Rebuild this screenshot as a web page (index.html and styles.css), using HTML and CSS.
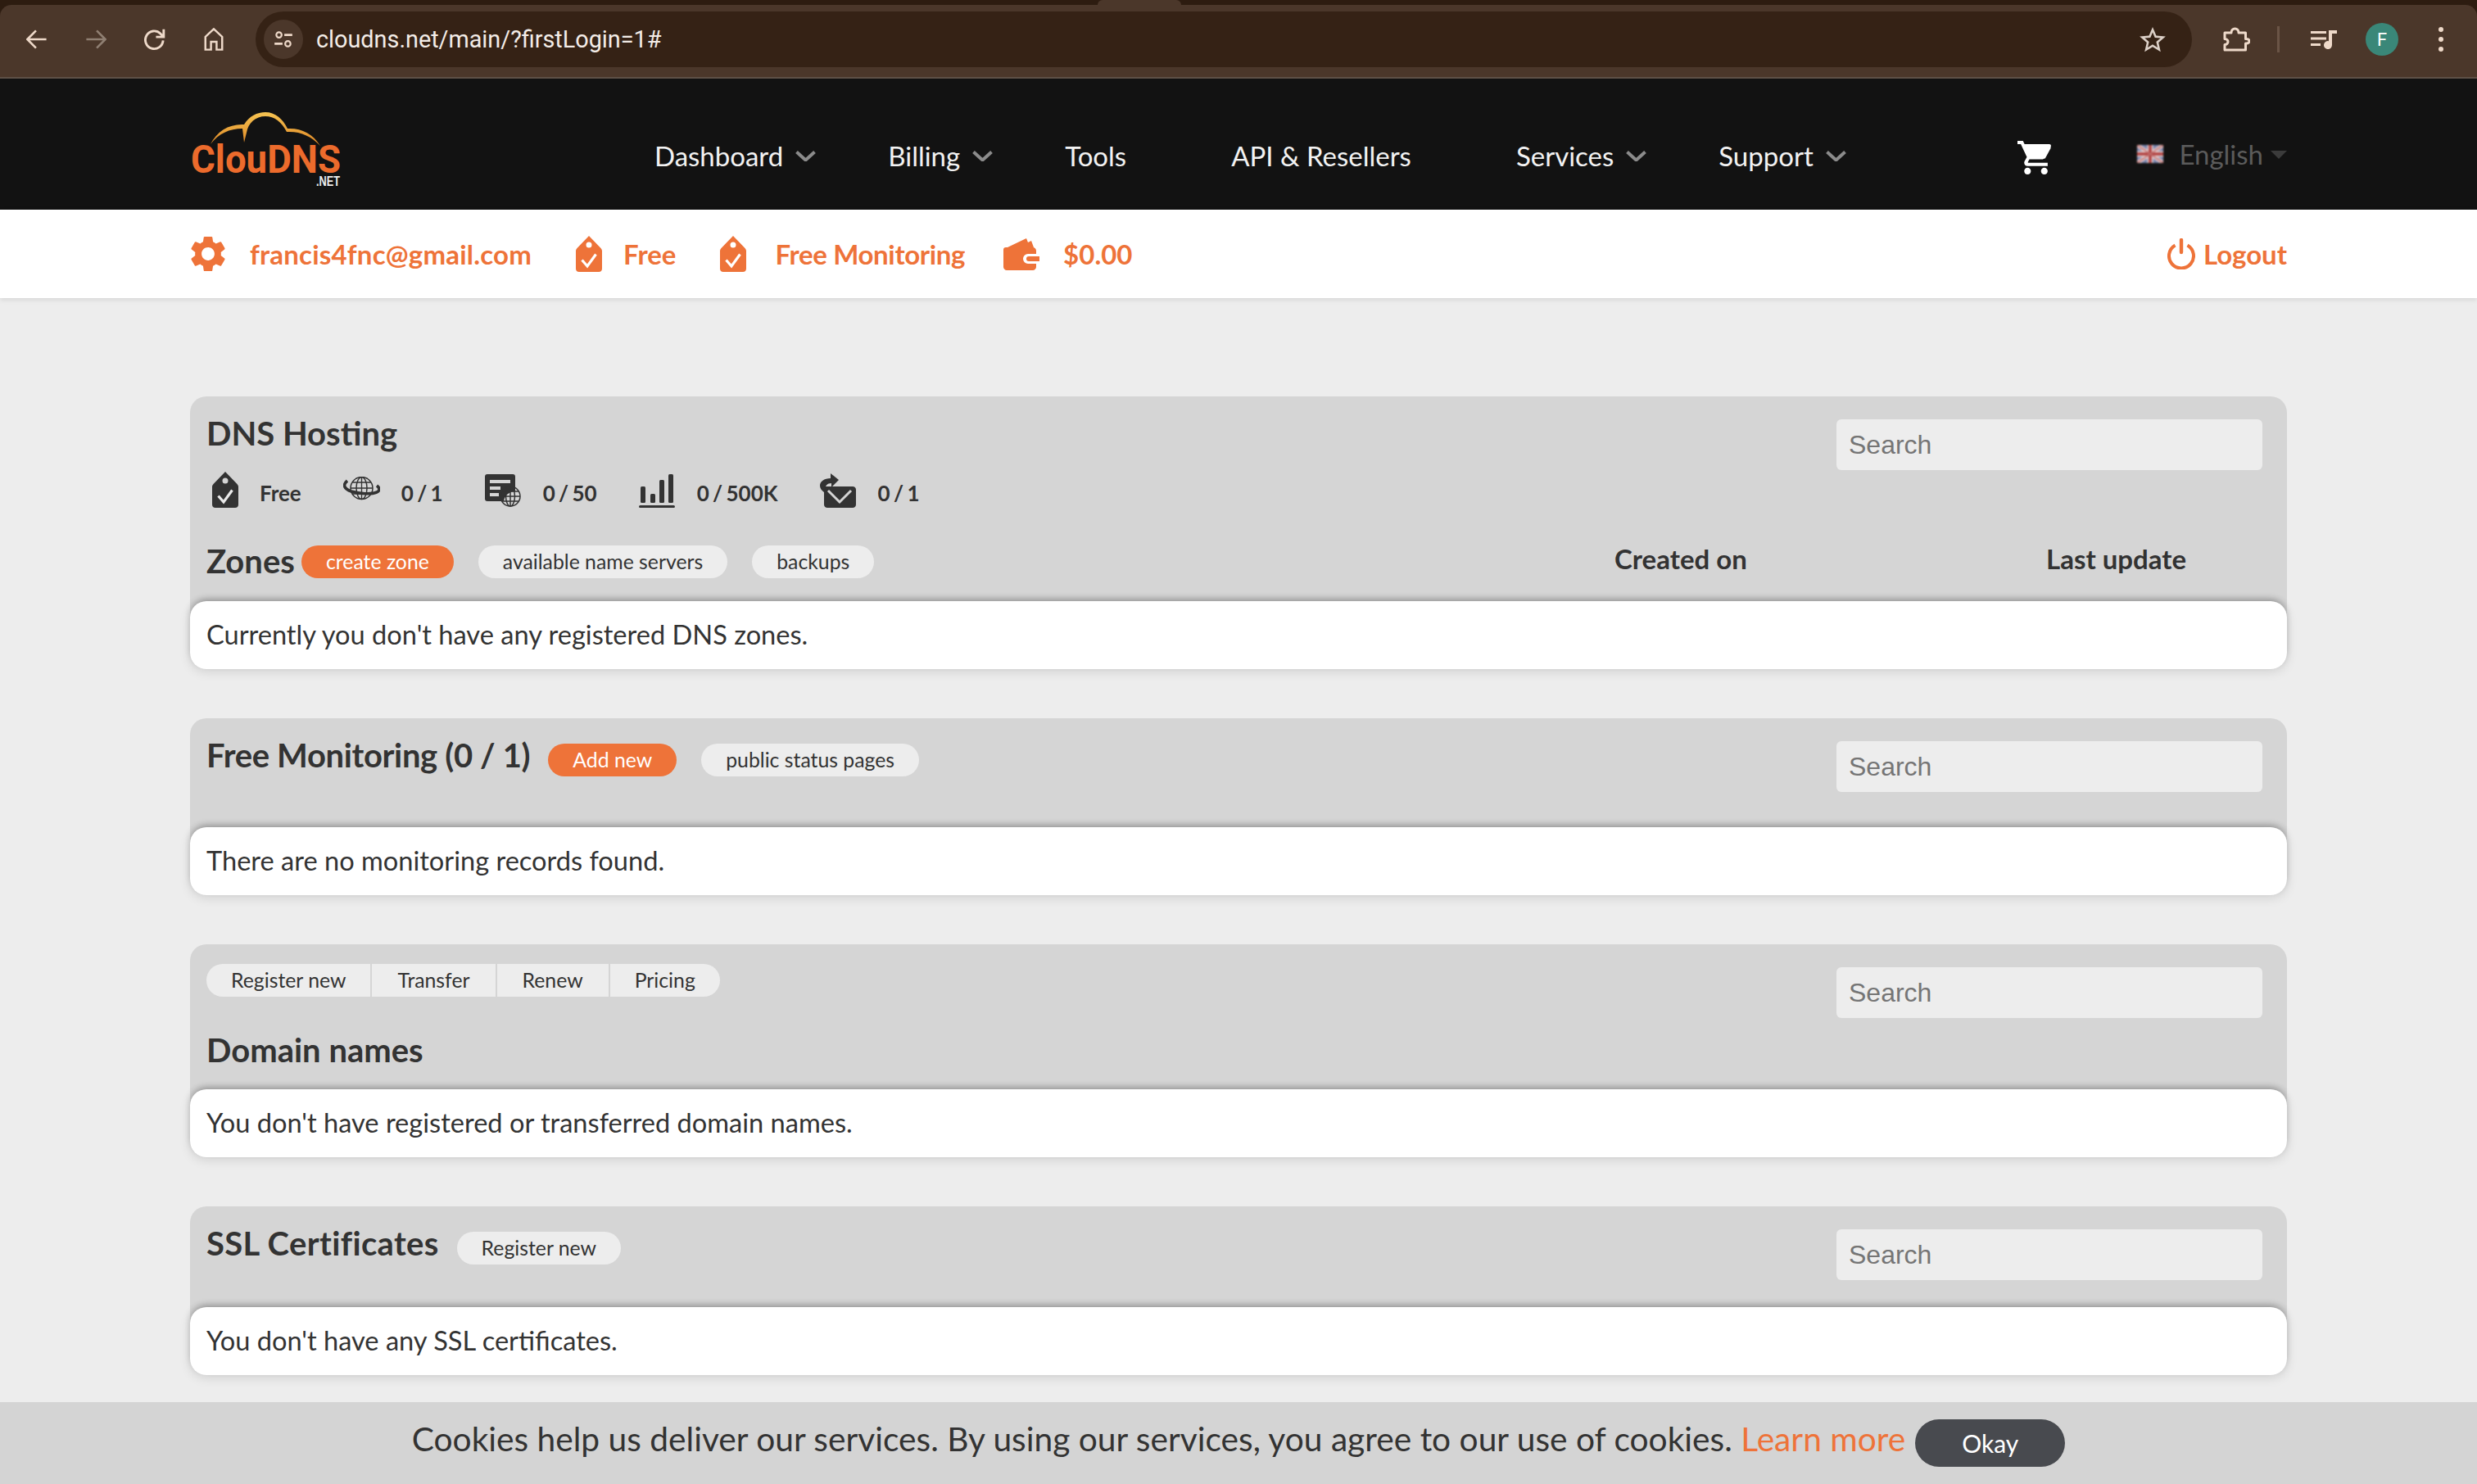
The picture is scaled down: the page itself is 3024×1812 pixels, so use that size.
FILE: index.html
```html
<!DOCTYPE html>
<html lang="en">
<head>
<meta charset="utf-8">
<title>ClouDNS</title>
<link rel="stylesheet" href="styles.css">
</head>
<body>
<svg class="defs" width="0" height="0" aria-hidden="true">
  <defs>
    <symbol id="tag" viewBox="0 0 32 44">
      <path fill-rule="evenodd" d="M16 0l14 14.500c1.300 1.300 2 2.500 2 4V40c0 2.500-1.500 4-4 4H4c-2.500 0-4-1.500-4-4V18.500c0-1.500.7-2.700 2-4zM16 7.500a3.500 3.500 0 1 0 0 7 3.500 3.500 0 0 0 0-7z"/>
      <path d="M7.500 29.500l6.500 7.500 10.500-14.500" fill="none" stroke="var(--cut)" stroke-width="3.200"/>
    </symbol>
  </defs>
</svg>

<header class="browser">
  <div class="toolbar">
    <div class="tool-group">
      <svg class="t-icon" viewBox="3 3.500 18.500 17"><path d="M20.500 12H4.500M11.500 4.500L4 12l7.500 7.500" fill="none" stroke="currentColor" stroke-width="1.800"/></svg>
      <svg class="t-icon dim" viewBox="2.500 3.500 18.500 17"><path d="M3.500 12h16M12.500 4.500L20 12l-7.500 7.500" fill="none" stroke="currentColor" stroke-width="1.800"/></svg>
      <svg class="t-icon" viewBox="3 2.500 18 19"><path d="M19 13a7.500 7.500 0 1 1-2.300-5.900L19 9.500M19.500 3.500V10H13" fill="none" stroke="currentColor" stroke-width="2"/></svg>
      <svg class="t-icon" viewBox="3.500 2 17 20.500"><path d="M4.500 21.500V10L12 3l7.500 7v11.500H14.500V14.500H9.500v7z" fill="none" stroke="currentColor" stroke-width="1.800"/></svg>
    </div>
    <div class="omnibox">
      <span class="tune"><svg viewBox="0 0 24 24" width="26" height="26"><circle cx="7" cy="7" r="3" fill="none" stroke="currentColor" stroke-width="2"/><path d="M13 7h9M2 17h9" stroke="currentColor" stroke-width="2.500"/><circle cx="17" cy="17" r="3" fill="none" stroke="currentColor" stroke-width="2"/></svg></span>
      <span class="url">cloudns.net/main/?firstLogin=1#</span>
      <svg class="star" viewBox="2 2 20 19.500"><path fill="currentColor" d="M22 9.240l-7.190-.62L12 2 9.190 8.630 2 9.240l5.460 4.730L5.820 21 12 17.270 18.180 21l-1.630-7.030L22 9.240zM12 15.400l-3.760 2.270 1-4.280-3.320-2.880 4.380-.38L12 6.100l1.710 4.040 4.380.38-3.320 2.880 1 4.280L12 15.400z"/></svg>
    </div>
    <div class="tool-right">
      <svg class="ext" viewBox="0 0 34 32"><path d="M3 8h8c0-3 2-5 4.500-5S20 5 20 8h8.500v7.500c3 0 4.500 1 4.500 2.500s-1.500 3-4.500 3v8H3v-6.500c2.500 0 4-1.800 4-3.500s-1.500-3.500-4-3.500z" fill="none" stroke="currentColor" stroke-width="3" stroke-linejoin="round"/></svg>
      <span class="sep"></span>
      <svg class="media" viewBox="0 0 32 24"><path d="M0 2h19v3H0zM0 9.500h19v3H0zM0 17h12v3H0zM22 1h10v4h-6v14a5 5 0 1 1-4-4.800z" fill="currentColor"/></svg>
      <span class="avatar">F</span>
      <span class="dots"><i></i><i></i><i></i></span>
    </div>
  </div>
</header>

<nav class="topnav">
  <a class="logo" href="#" aria-label="ClouDNS.net">
    <svg viewBox="0 0 200 100" width="200" height="100">
      <defs>
        <linearGradient id="cloudgrad" x1="0" x2="0" y1="0" y2="1">
          <stop offset="0" stop-color="#f6c452"/>
          <stop offset="1" stop-color="#dd8524"/>
        </linearGradient>
      </defs>
      <path d="M25 40C33 24 48 15 66 16 72 6 82 1 92 1c12 0 21 8 27 20 16-1 31 6 40 21-11-12-25-18-41-17C112 13 103 6 92 6 80 6 71 14 69 26L66 38 64 21C48 21 35 27 25 40z" fill="url(#cloudgrad)"/>
      <text class="logo-main" x="1" y="75" textLength="183" lengthAdjust="spacingAndGlyphs">ClouDNS</text>
      <text class="logo-net" x="154" y="91" textLength="29" lengthAdjust="spacingAndGlyphs">.NET</text>
    </svg>
  </a>
  <ul class="menu">
    <li class="menu-item">Dashboard<svg class="chev" viewBox="0 0 25 13"><path d="M1.500 1.500l11 10 11-10" fill="none" stroke="currentColor" stroke-width="4"/></svg></li>
    <li class="menu-item">Billing<svg class="chev" viewBox="0 0 25 13"><path d="M1.500 1.500l11 10 11-10" fill="none" stroke="currentColor" stroke-width="4"/></svg></li>
    <li class="menu-item plain">Tools</li>
    <li class="menu-item plain">API &amp; Resellers</li>
    <li class="menu-item">Services<svg class="chev" viewBox="0 0 25 13"><path d="M1.500 1.500l11 10 11-10" fill="none" stroke="currentColor" stroke-width="4"/></svg></li>
    <li class="menu-item">Support<svg class="chev" viewBox="0 0 25 13"><path d="M1.500 1.500l11 10 11-10" fill="none" stroke="currentColor" stroke-width="4"/></svg></li>
  </ul>
  <svg class="cart" viewBox="1 2 21 20"><path fill="currentColor" d="M7 18c-1.100 0-1.990.9-1.990 2S5.900 22 7 22s2-.9 2-2-.9-2-2-2zM1 2v2h2l3.600 7.590-1.350 2.450c-.16.28-.25.61-.25.96 0 1.100.9 2 2 2h12v-2H7.420c-.14 0-.25-.11-.25-.25l.03-.12.9-1.630h7.450c.75 0 1.410-.41 1.750-1.030l3.580-6.490c.08-.14.12-.31.12-.48 0-.55-.45-1-1-1H5.210l-.94-2H1zm16 16c-1.100 0-1.990.9-1.990 2s.89 2 1.990 2 2-.9 2-2-.9-2-2-2z"/><path fill="currentColor" d="M6 6h15l-3.500 6.500H8.500z"/></svg>
  <div class="lang">
    <svg class="flag" viewBox="0 0 32 22"><rect width="32" height="22" fill="#6f7fb4"/><path d="M0 0l32 22M32 0L0 22" stroke="#e9c9c9" stroke-width="5"/><path d="M16 0v22M0 11h32" stroke="#ecdcdc" stroke-width="7"/><path d="M16 0v22M0 11h32" stroke="#c9413f" stroke-width="4"/><path d="M0 0l32 22M32 0L0 22" stroke="#cf6a6a" stroke-width="1.500"/></svg>
    <span class="lang-name">English</span>
    <span class="caret"></span>
  </div>
</nav>

<div class="subbar">
  <a class="sub-item item-email" href="#">
    <svg class="gear" viewBox="2.500 2 19 20"><path fill="currentColor" d="M19.140 12.940c.04-.3.06-.61.06-.94 0-.32-.02-.64-.07-.94l2.030-1.580c.18-.14.23-.41.12-.61l-1.920-3.320c-.12-.22-.37-.29-.59-.22l-2.390.96c-.5-.38-1.030-.7-1.620-.94l-.36-2.540c-.04-.24-.24-.41-.48-.41h-3.840c-.24 0-.43.17-.47.41l-.36 2.540c-.59.24-1.130.57-1.620.94l-2.390-.96c-.22-.08-.47 0-.59.22L2.740 8.870c-.12.21-.08.47.12.61l2.030 1.580c-.05.3-.09.63-.09.94s.02.64.07.94l-2.030 1.580c-.18.14-.23.41-.12.61l1.920 3.320c.12.22.37.29.59.22l2.390-.96c.5.38 1.030.7 1.620.94l.36 2.540c.05.24.24.41.48.41h3.840c.24 0 .44-.17.47-.41l.36-2.540c.59-.24 1.130-.56 1.620-.94l2.390.96c.22.08.47 0 .59-.22l1.920-3.320c.12-.22.07-.47-.12-.61l-2.010-1.580zM12 15.600c-1.980 0-3.600-1.620-3.600-3.600s1.620-3.600 3.600-3.600 3.600 1.620 3.600 3.600-1.620 3.600-3.600 3.600z"/></svg>
    francis4fnc@gmail.com
  </a>
  <a class="sub-item item-free" href="#"><svg class="tag-o"><use href="#tag"/></svg>Free</a>
  <a class="sub-item item-mon" href="#"><svg class="tag-o"><use href="#tag"/></svg>Free Monitoring</a>
  <a class="sub-item item-bal" href="#">
    <svg class="wallet" viewBox="0 0 44 40"><path fill="currentColor" d="M5 12L28 1l2 5 4-2 3 8zM3 12h33c2 0 4 2 4 4v4H30a6 6 0 0 0 0 12h10v4c0 2-2 4-4 4H4c-2 0-4-2-4-4V15c0-2 1-3 3-3zM31 23h13v6H31a3 3 0 0 1 0-6z"/></svg>
    $0.00
  </a>
  <a class="sub-item item-logout" href="#">
    <svg class="power" viewBox="0 0 34 38"><path d="M9.500 8.500a15 15 0 1 0 15 0" fill="none" stroke="currentColor" stroke-width="4"/><path d="M17 2v15" stroke="currentColor" stroke-width="4.400" stroke-linecap="round"/></svg>
    Logout
  </a>
</div>

<main class="content">
  <section class="panel">
    <div class="head head-dns">
      <div class="head-top">
        <div class="head-main">
          <h2 class="title">DNS Hosting</h2>
          <div class="stats">
            <span class="stat"><svg class="s-tag"><use href="#tag"/></svg>Free</span>
            <span class="stat">
              <svg class="s-globe" viewBox="0 0 45 29"><g fill="none" stroke="currentColor"><circle cx="22.500" cy="14" r="13.500" stroke-width="1.500"/><ellipse cx="22.500" cy="14" rx="6.500" ry="13.500" stroke-width="1.500"/><path d="M22.500 1v26M9 14h27M11 7h23M11 21h23" stroke-width="1.300"/><path d="M5 5C-1 10 1 15 10 18c10 3 24 4 31 1 4-2 4-5 0-8" stroke-width="3.600"/></g></svg>
              0 / 1
            </span>
            <span class="stat">
              <svg class="s-server" viewBox="0 0 44 40"><path fill="currentColor" d="M3 0h31c2 0 3 1 3 3v18a14 14 0 0 0-14 12H3c-2 0-3-1-3-3V3c0-2 1-3 3-3z"/><path d="M6 7h25v4H6zM6 15h13v4H6zM6 23h11v4H6z" fill="#d5d5d5"/><g fill="none" stroke="currentColor" stroke-width="1.500"><circle cx="31" cy="27" r="12"/><ellipse cx="31" cy="27" rx="5.500" ry="12"/><path d="M31 15v24M19 27h24M21 21h20M21 33h20"/></g></svg>
              0 / 50
            </span>
            <span class="stat">
              <svg class="s-bars" viewBox="0 0 44 41"><g fill="currentColor"><rect x="2" y="15" width="6" height="20" rx="1.500"/><rect x="14" y="24" width="6" height="11" rx="1.500"/><rect x="25" y="7" width="6" height="28" rx="1.500"/><rect x="36" y="0" width="6" height="35" rx="1.500"/><rect x="0" y="38" width="44" height="3" rx="1.500"/></g></svg>
              0 / 500K
            </span>
            <span class="stat">
              <svg class="s-mail" viewBox="0 0 44 42"><path fill="currentColor" d="M5 16h35c2 0 4 1.500 4 4v18c0 2.500-2 4-4 4H9c-2 0-4-1.500-4-4z"/><path d="M10 21l14 14 14-14" fill="none" stroke="#d5d5d5" stroke-width="3"/><path fill="currentColor" d="M13 0l10 8-9 9v-5c-5 0-8 3-9 11-3-2-5-5-5-8 0-5 5-9 13-9z"/></svg>
              0 / 1
            </span>
          </div>
        </div>
        <input class="search" type="text" placeholder="Search" aria-label="Search">
      </div>
      <div class="zones">
        <div class="zones-left">
          <span class="zones-title">Zones</span>
          <a class="pill orange" href="#">create zone</a>
          <a class="pill" href="#">available name servers</a>
          <a class="pill" href="#">backups</a>
        </div>
        <span class="col-label">Created on</span>
        <span class="col-label">Last update</span>
      </div>
    </div>
    <div class="body">Currently you don't have any registered DNS zones.</div>
  </section>

  <section class="panel">
    <div class="head head-mon">
      <div class="head-row">
        <h2 class="title title-mon">Free Monitoring (0 / 1)</h2>
        <a class="pill orange" href="#">Add new</a>
        <a class="pill" href="#">public status pages</a>
      </div>
      <input class="search" type="text" placeholder="Search" aria-label="Search">
    </div>
    <div class="body">There are no monitoring records found.</div>
  </section>

  <section class="panel">
    <div class="head head-dom">
      <div class="head-stack">
        <div class="segments">
          <a class="segment" href="#">Register new</a>
          <a class="segment" href="#">Transfer</a>
          <a class="segment" href="#">Renew</a>
          <a class="segment" href="#">Pricing</a>
        </div>
        <h2 class="title title-dom">Domain names</h2>
      </div>
      <input class="search" type="text" placeholder="Search" aria-label="Search">
    </div>
    <div class="body">You don't have registered or transferred domain names.</div>
  </section>

  <section class="panel">
    <div class="head head-ssl">
      <div class="head-row">
        <h2 class="title title-ssl">SSL Certificates</h2>
        <a class="pill" href="#">Register new</a>
      </div>
      <input class="search" type="text" placeholder="Search" aria-label="Search">
    </div>
    <div class="body">You don't have any SSL certificates.</div>
  </section>
</main>

<div class="cookie">
  <span class="cookie-text">Cookies help us deliver our services. By using our services, you agree to our use of cookies. <a href="#">Learn more</a></span>
  <button class="okay" type="button">Okay</button>
</div>
</body>
</html>
```
FILE: styles.css
```css
* { box-sizing: border-box; }
html, body { margin: 0; padding: 0; }
body {
  background: #ededed;
  color: #333;
  font-family: "Lato", "Noto Sans", sans-serif;
  height: 1812px;
  overflow: hidden;
}
a { color: inherit; text-decoration: none; }
.defs { position: absolute; }

/* browser chrome */
.browser { background: #2d1c10; height: 96px; padding-top: 6px; position: relative; }
.browser::before {
  content: "";
  position: absolute;
  left: 1340px; top: 0;
  width: 102px; height: 6px;
  background: #4b372a;
  border-radius: 6px 6px 0 0;
}
.toolbar {
  height: 90px;
  background: #4b372a;
  border-radius: 14px 14px 0 0;
  border-bottom: 2px solid #5e5147;
  display: flex;
  align-items: flex-start;
  padding: 8px 0 0 32px;
  color: #eed9c9;
}
.tool-group { display: flex; align-items: center; gap: 46px; height: 68px; }
.t-icon { width: 26px; height: 28px; display: block; }
.t-icon.dim { color: #8f7f72; }
.omnibox {
  margin-left: 38px;
  width: 2364px;
  height: 68px;
  border-radius: 34px;
  background: #352215;
  display: flex;
  align-items: center;
  padding: 0 32px 0 10px;
}
.tune {
  width: 48px; height: 48px; border-radius: 50%;
  background: #4b372a;
  display: flex; align-items: center; justify-content: center;
  color: #eed9c9;
}
.url {
  margin-left: 16px;
  flex: 1;
  font: 400 28.800px "Roboto", sans-serif;
  color: #f3ece7;
}
.star { width: 32px; height: 31px; color: #dcd0c7; }
.tool-right { display: flex; align-items: center; height: 68px; margin-left: 37px; }
.ext { width: 34px; height: 32px; }
.sep { width: 3px; height: 32px; background: #6a5446; margin-left: 33px; }
.media { width: 32px; height: 24px; margin-left: 38px; }
.avatar {
  width: 40px; height: 40px; border-radius: 50%;
  background: #3a8778; color: #fff;
  margin-left: 35px;
  display: flex; align-items: center; justify-content: center;
  font: 400 22px "Roboto", sans-serif;
}
.dots { display: flex; flex-direction: column; gap: 6px; margin-left: 49px; }
.dots i { width: 6px; height: 6px; border-radius: 50%; background: #eed9c9; display: block; }

/* top nav */
.topnav {
  height: 160px;
  background: #121212;
  padding: 0 232px;
  display: flex;
  align-items: center;
  color: #f2f2f2;
}
.logo { width: 200px; height: 100px; display: block; margin-top: 20px; }
.logo svg { display: block; }
.logo-main { font: 700 48px "Roboto", sans-serif; fill: #ec6b2c; }
.logo-net { font: 700 16px "Liberation Sans", sans-serif; fill: #eee; }
.menu {
  list-style: none;
  margin: 0 0 0 367px;
  padding: 28px 0 0;
  display: flex;
  gap: 88px;
  height: 100%;
  align-items: center;
}
.menu-item { display: flex; align-items: center; font-size: 33px; white-space: nowrap; }
.menu-item.plain { padding-right: 40px; }
.chev { width: 25px; height: 13px; margin-left: 15px; color: #8b8b8b; }
.cart { width: 43px; height: 43px; color: #fff; margin-left: 209px; margin-top: 33px; }
.lang { display: flex; align-items: center; margin-left: auto; color: #5b5b5b; font-size: 33px; margin-top: 23px; }
.flag { width: 32px; height: 22px; filter: blur(.8px) saturate(.8); }
.lang-name { margin-left: 19px; }
.caret {
  width: 0; height: 0;
  margin-left: 9px; margin-top: 2px;
  border-left: 10px solid transparent;
  border-right: 10px solid transparent;
  border-top: 10px solid #3b3b3b;
}

/* subbar */
.subbar {
  height: 108px;
  background: #fff;
  padding: 0 232px;
  display: flex;
  align-items: center;
  color: #ee7339;
  font-size: 33px;
  font-weight: 700;
  box-shadow: 0 2px 6px rgba(0,0,0,.1);
  --cut: #fff;
}
.sub-item { display: flex; align-items: center; white-space: nowrap; }
.item-email { letter-spacing: .2px; }
.gear { width: 44px; height: 44px; margin-right: 29px; }
.tag-o { width: 32px; height: 44px; fill: currentColor; }
.item-free { margin-left: 54px; }
.item-free .tag-o { margin-right: 26px; }
.item-mon { margin-left: 54px; letter-spacing: -.35px; }
.item-mon .tag-o { margin-right: 35px; }
.item-bal { margin-left: 47px; }
.wallet { width: 44px; height: 40px; margin-right: 29px; }
.item-logout { margin-left: auto; }
.power { width: 34px; height: 38px; margin-right: 10px; }

/* panels */
.content { padding: 120px 232px 0; display: flex; flex-direction: column; gap: 60px; --cut: #e9e9e9; }
.panel { background: #d5d5d5; border-radius: 20px; }
.head { display: flex; justify-content: space-between; align-items: flex-start; padding: 0 30px 0 20px; }
.head-dns { display: block; height: 250px; }
.head-mon { height: 133px; }
.head-dom { height: 177px; }
.head-ssl { height: 123px; }
.head-top { display: flex; justify-content: space-between; align-items: flex-start; }
.head-row { display: flex; align-items: flex-start; padding-top: 20px; }
.head-row .pill { margin-top: 11px; margin-left: 30px; }
.head-row .title + .pill { margin-left: 22px; }
.title { margin: 0; padding-top: 20px; font-size: 40px; line-height: 50px; font-weight: 700; color: #333; white-space: nowrap; }
.head-row .title { padding-top: 0; }
.title-mon { letter-spacing: -.35px; }
.title-ssl { letter-spacing: .35px; }
.search {
  width: 520px;
  height: 62px;
  margin-top: 28px;
  background: #ededed;
  border: 0;
  border-radius: 6px;
  padding: 0 15px;
  font: 400 32px "Liberation Sans", sans-serif;
  color: #333;
  outline: 0;
  display: block;
}
.search::placeholder { color: #757575; opacity: 1; }

.stats { display: flex; align-items: center; gap: 51px; height: 44px; margin-top: 24px; font-size: 26px; font-weight: 700; margin-left: 7px; color: #333; word-spacing: -2px; }
.stat { display: flex; align-items: center; white-space: nowrap; padding-top: 4px; }
.stat svg { transform: translateY(-3px); }
.s-tag { width: 32px; height: 44px; fill: currentColor; margin-right: 26px; margin-top: -2px; }
.s-globe { width: 45px; height: 29px; margin-right: 26px; margin-top: -6px; }
.s-server { width: 44px; height: 40px; margin-right: 27px; }
.s-bars { width: 44px; height: 41px; margin-right: 27px; }
.s-mail { width: 44px; height: 42px; margin-right: 27px; }

.zones { display: grid; grid-template-columns: 1719px 527px 1fr; align-items: flex-start; margin-top: 44px; }
.zones-left { display: flex; align-items: center; height: 40px; }
.zones-title { font-size: 40px; line-height: 40px; font-weight: 700; width: 116px; white-space: nowrap; margin-top: -3px; }
.zones-left .pill { margin-right: 30px; }
.col-label { font-size: 33px; font-weight: 700; line-height: 36px; white-space: nowrap; margin-top: -2px; }

.pill {
  display: inline-flex;
  align-items: center;
  height: 40px;
  padding: 0 30px 1px;
  border-radius: 20px;
  background: #ededed;
  font-size: 24.800px;
  color: #333;
  white-space: nowrap;
}
.pill.orange { background: #ee7339; color: #fff; }
.segments { display: flex; margin-top: 24px; }
.segment {
  height: 40px;
  padding: 0 30px 1px;
  display: flex;
  align-items: center;
  background: #ededed;
  font-size: 24.800px;
  border-right: 2px solid #d5d5d5;
  white-space: nowrap;
}
.segment:nth-child(2) { padding-left: 31px; padding-right: 31px; }
.segment:nth-child(3) { padding-left: 31px; padding-right: 31px; }
.segment:first-child { border-radius: 20px 0 0 20px; }
.segment:last-child { border-radius: 0 20px 20px 0; border-right: 0; }
.title-dom { padding-top: 40px; }

.body {
  height: 83px;
  background: #fff;
  border-radius: 20px;
  padding: 0 20px 2px;
  display: flex;
  align-items: center;
  font-size: 32.600px;
  color: #333;
  box-shadow: 0 -4px 8px -2px rgba(0,0,0,.3), 0 3px 14px rgba(0,0,0,.12);
  position: relative;
}

/* cookie bar */
.cookie {
  position: fixed;
  left: 0; right: 0; bottom: 0;
  height: 100px;
  background: #d4d4d4;
  display: flex;
  align-items: center;
  justify-content: center;
  gap: 12px;
  color: #333;
  font-size: 40.700px;
}
.cookie-text { padding-bottom: 12px; }
.cookie a { color: #ee7339; }
.okay {
  width: 183px;
  height: 58px;
  margin-top: 0;
  border: 0;
  border-radius: 29px;
  background: #484a4f;
  color: #fff;
  font: 400 30px "Lato", sans-serif;
}
```
